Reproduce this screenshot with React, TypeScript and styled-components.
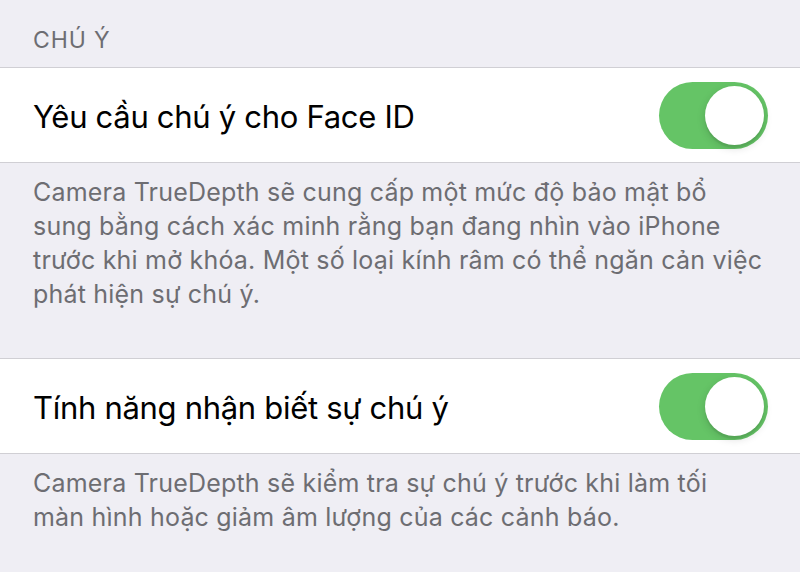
import React from "react";
import styled, { createGlobalStyle } from "styled-components";

const GlobalStyle = createGlobalStyle`
  html, body {
    margin: 0;
    padding: 0;
    background: #efeef4;
  }
  body {
    font-family: Inter, "Noto Sans", sans-serif;
    -webkit-font-smoothing: antialiased;
  }
`;

type Setting = {
  title: string;
  note: string;
  on: boolean;
};

const settings: Setting[] = [
  {
    title: "Yêu cầu chú ý cho Face ID",
    note: "Camera TrueDepth sẽ cung cấp một mức độ bảo mật bổ sung bằng cách xác minh rằng bạn đang nhìn vào iPhone trước khi mở khóa. Một số loại kính râm có thể ngăn cản việc phát hiện sự chú ý.",
    on: true,
  },
  {
    title: "Tính năng nhận biết sự chú ý",
    note: "Camera TrueDepth sẽ kiểm tra sự chú ý trước khi làm tối màn hình hoặc giảm âm lượng của các cảnh báo.",
    on: true,
  },
];

export default function App() {
  const [state, setState] = React.useState(settings.map((s) => s.on));

  const toggle = (i: number) =>
    setState((prev) => prev.map((v, j) => (j === i ? !v : v)));

  return (
    <>
      <GlobalStyle />
      <Page>
        <SectionHeader>CHÚ Ý</SectionHeader>
        {settings.map((s, i) => (
          <section key={s.title}>
            <Row>
              <RowTitle>{s.title}</RowTitle>
              <Switch on={state[i]} onClick={() => toggle(i)}>
                <Knob on={state[i]} />
              </Switch>
            </Row>
            <Footer>{s.note}</Footer>
          </section>
        ))}
      </Page>
    </>
  );
}

const Page = styled.div`
  width: 800px;
  height: 572px;
  overflow: hidden;
  background: #efeef4;
`;

const SectionHeader = styled.div`
  box-sizing: border-box;
  height: 67px;
  padding: 26px 33px 0;
  font-size: 23px;
  letter-spacing: 0.9px;
  color: #6d6d72;
`;

const Row = styled.div`
  display: flex;
  align-items: center;
  justify-content: space-between;
  height: 94px;
  padding: 0 32px 0 33px;
  background: #fff;
  border-top: 1px solid #d0cfd4;
  border-bottom: 1px solid #d0cfd4;
`;

const RowTitle = styled.div`
  font-size: 31px;
  color: #000;
  letter-spacing: -0.3px;
  padding-top: 3px;
`;

const Switch = styled.button<{ on: boolean }>`
  position: relative;
  width: 109px;
  height: 67px;
  padding: 0;
  border: none;
  border-radius: 34px;
  cursor: pointer;
  background: ${({ on }) => (on ? "#65c466" : "#e9e9ea")};
`;

const Knob = styled.span<{ on: boolean }>`
  position: absolute;
  top: 4px;
  left: ${({ on }) => (on ? "46px" : "4px")};
  width: 59px;
  height: 59px;
  border-radius: 50%;
  background: #fff;
  box-shadow: 0 3px 8px rgba(0, 0, 0, 0.15), 0 3px 1px rgba(0, 0, 0, 0.06);
`;

const Footer = styled.p`
  box-sizing: border-box;
  height: 195px;
  margin: 0;
  padding: 12px 35px 0 33px;
  font-size: 25px;
  line-height: 34px;
  letter-spacing: 0.2px;
  color: #6d6d72;
`;
